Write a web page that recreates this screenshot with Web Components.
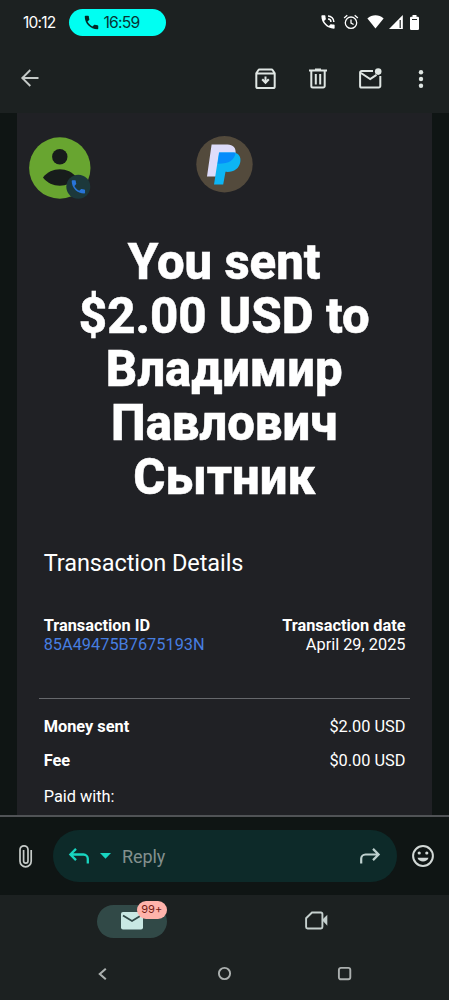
<!DOCTYPE html>
<html lang="en">
<head>
<meta charset="utf-8">
<title>Mail</title>
<style>
body{margin:0;width:449px;height:1000px;overflow:hidden;background:#1c2121;font-family:Roboto,"Noto Sans",sans-serif;color:#fff}
</style>
</head>
<body>
<mail-app></mail-app>
<script>
const define = (name, markup) => customElements.define(name, class extends HTMLElement {
  constructor() {
    super();
    const t = document.createElement('template');
    t.innerHTML = '<style>*{box-sizing:border-box}svg{display:block;flex:none;overflow:visible}</style>' + markup;
    this.attachShadow({ mode: 'open' }).appendChild(t.content.cloneNode(true));
  }
});
const handset = 'M6.62 10.79c1.44 2.83 3.76 5.14 6.59 6.59l2.2-2.2c.27-.27.67-.36 1.02-.24 1.12.37 2.33.57 3.57.57.55 0 1 .45 1 1V20c0 .55-.45 1-1 1C10.61 21 3 13.39 3 4c0-.55.45-1 1-1h3.5c.55 0 1 .45 1 1 0 1.25.2 2.45.57 3.57.11.35.03.74-.25 1.02z';

define('status-bar', `
<style>
:host{display:flex;align-items:center;height:44px;font-family:Inter,sans-serif}
.time{width:46px;margin-left:23px;font-size:15.500px;font-weight:400;letter-spacing:-.75px;white-space:nowrap}
.call{display:flex;align-items:center;width:96.500px;height:27px;border-radius:14px;background:#00fff2;color:#063634;padding-left:14.500px;font-size:15.700px;letter-spacing:-.8px}
.call svg{margin-right:5px}
.icons{display:flex;align-items:center;margin-left:155px}
</style>
<span class="time">10:12</span>
<div class="call"><svg width="15" height="15" viewBox="2 2 20 20" fill="#032826"><path d="${handset}"/></svg><span>16:59</span></div>
<div class="icons">
<svg width="14" height="14" viewBox="2.500 2.500 19 19" fill="#fff"><path d="${handset}"/><path d="M12 4a8 8 0 0 1 8 8M12 8a4 4 0 0 1 4 4" fill="none" stroke="#fff" stroke-width="2"/></svg>
<svg style="margin-left:8px" width="16" height="16" viewBox="0 0 16 16" fill="none" stroke="#fff" stroke-width="1.300"><circle cx="8" cy="8.700" r="5.700"/><path d="M8 5.400v3.700l2.600 1.400M1.100 4 4.300 1.200M14.900 4l-3.200-2.800"/></svg>
<svg style="margin-left:8px" width="17" height="14" viewBox="0 0 17 14" fill="#fff"><path d="M.4 3.500C5-.7 12-.7 16.600 3.500L8.500 13.600z"/></svg>
<svg style="margin-left:5px" width="14" height="14" viewBox="0 0 14 14" fill="#fff"><path d="M0 14 13.800 0v14z"/><path d="M11.200 5v8" stroke="#1c2121" stroke-width="1.200"/></svg>
<svg style="margin-left:7px" width="9" height="15" viewBox="0 0 9 15" fill="#fff"><rect y="1.700" width="9" height="13.300" rx="1.200"/><rect x="2.500" width="4" height="3"/><path d="M2 4.500h5" stroke="#1c2121" stroke-width="1"/></svg>
</div>`);

define('mail-toolbar', `
<style>
:host{display:flex;align-items:center;height:69px;padding-left:21px}
</style>
<svg style="margin-bottom:2px" width="18" height="18" viewBox="0 0 18 18" fill="none" stroke="#c5cac8" stroke-width="1.900"><path d="M17.500 9H1.500M9.300 1 1.300 9l8 8"/></svg>
<svg style="margin-left:216px" width="21" height="21" viewBox="0 0 21 21" fill="none" stroke="#dfe6e3" stroke-width="2"><path d="M1.300 5.200 3.300 2.200A1.600 1.600 0 0 1 4.500 1.500H16.500A1.600 1.600 0 0 1 17.700 2.200L19.700 5.200V18.400a1.600 1.600 0 0 1-1.600 1.600H2.900A1.600 1.600 0 0 1 1.300 18.400zM1.500 5.600h18M10.500 8.500v6"/><path d="M7.200 11.300l3.300 3.300 3.300-3.300" stroke-width="2.200"/></svg>
<svg style="margin-left:33px" width="18" height="21" viewBox="0 0 18 21" fill="none" stroke="#dfe6e3" stroke-width="2"><path d="M0 2.500h18M6 1.400h6M2.300 3v15a1.500 1.500 0 0 0 1.500 1.500h10.400a1.500 1.500 0 0 0 1.500-1.500V3M6.800 6v10.500M11.200 6v10.500"/></svg>
<svg style="margin-left:32px" width="23" height="21" viewBox="0 0 23 21"><path d="M14 3H2.700A1.600 1.600 0 0 0 1.100 4.600V18a1.600 1.600 0 0 0 1.600 1.600H19.700A1.600 1.600 0 0 0 21.300 18V8M2 5l9.200 6 6.300-4.200" fill="none" stroke="#dfe6e3" stroke-width="2"/><circle cx="19.200" cy="3.600" r="3.300" fill="#dfe6e3"/></svg>
<svg style="margin-left:36.500px" width="5" height="18" viewBox="0 0 5 18" fill="#dfe6e3"><circle cx="2" cy="2.300" r="2.200"/><circle cx="2" cy="9" r="2.200"/><circle cx="2" cy="15.700" r="2.200"/></svg>`);

define('sender-avatar', `
<style>:host{display:block;width:62px;height:62px}</style>
<svg width="62" height="62" viewBox="0 0 62 62"><circle cx="30.800" cy="31" r="30.700" fill="#68a530"/><circle cx="30.800" cy="19.800" r="7.700" fill="#171c1b"/><path d="M14 40.500C22 29.500 39.600 29.500 47.600 40.500C39.600 51.500 22 51.500 14 40.500z" fill="#171c1b"/><circle cx="49.300" cy="49.800" r="12" fill="#1c383b"/><g transform="translate(40.500 41) scale(.74)"><path fill="#2874d8" d="${handset}"/></g></svg>`);

define('paypal-logo', `
<style>:host{display:block;width:57px;height:57px}</style>
<svg width="57" height="57" viewBox="0 0 57 57"><circle cx="28.500" cy="28.200" r="28.200" fill="#534a3c"/><path d="M15.600 8.500H31.500C37 8.500 40.500 12 39.500 18 38 25.500 32 28.500 24.500 28L20 40.500H11z" fill="#dedcfa"/><path d="M23 16.500H37.500C43 17.200 45.200 21 44.300 26 43 33 37.500 36.500 29.500 35.800L27.200 48.500H18z" fill="#0db5f4"/><path d="M23.300 16.500H39.600C38.700 24 33 28 21.700 27.800z" fill="#078cfb"/></svg>`);

define('detail-row', `
<style>:host{display:flex;justify-content:space-between;height:19px;line-height:19px;font-size:16.330px;padding:0 26px 0 26.700px}</style>
<slot></slot>`);

define('mail-message', `
<style>
:host{display:block;height:702px;background:#0f1514;padding:0 17.500px 0 17px;overflow:hidden}
article{height:702px;background:#202125;overflow:hidden}
header{display:flex;padding:24px 0 0 11.500px;height:109px}
paypal-logo{margin:-1px 0 0 105px}
h1{margin:14px 0 0;font-size:49.100px;line-height:53.700px;font-weight:800;text-align:center;-webkit-text-stroke:.5px #fff}
h1 span{display:block;white-space:nowrap}
h2{margin:43px 0 0 26.700px;font-size:23.500px;line-height:30px;font-weight:400;letter-spacing:-.08px}
h2+detail-row{margin-top:38px}
a{color:#477ee0}
hr{margin:44px 22px 0;border:0;height:1px;background:#66686c}
</style>
<article>
<header><sender-avatar></sender-avatar><paypal-logo></paypal-logo></header>
<h1><span>You sent</span><span>$2.00 USD to</span><span>Владимир</span><span>Павлович</span><span>Сытник</span></h1>
<h2>Transaction Details</h2>
<detail-row><b>Transaction ID</b><b>Transaction date</b></detail-row>
<detail-row><a>85A49475B7675193N</a><span>April 29, 2025</span></detail-row>
<hr>
<detail-row style="margin-top:18px"><b>Money sent</b><span>$2.00 USD</span></detail-row>
<detail-row style="margin-top:15px"><b>Fee</b><span>$0.00 USD</span></detail-row>
<detail-row style="margin-top:17px"><span>Paid with:</span></detail-row>
</article>`);

define('reply-bar', `
<style>
:host{display:flex;align-items:center;height:80px;background:#0f1514;border-top:2px solid #505356;padding-left:19px}
.field{display:flex;align-items:center;width:344px;height:52.500px;margin-left:20.500px;border-radius:27px;background:#0d2a29;padding-left:16.500px}
.field span{width:238px;margin-left:11.500px;font-size:18px;letter-spacing:-.1px;color:#83908e}
</style>
<svg width="13" height="23" viewBox="0 0 13 23" fill="none" stroke="#c6cbc9" stroke-width="1.700"><path d="M12.200 5v11.200a5.600 5.600 0 0 1-11.200 0V4.800a4 4 0 0 1 8 0V16a2.200 2.200 0 0 1-4.400 0V5"/></svg>
<div class="field">
<svg width="20" height="16" viewBox="0 0 20 16" fill="none" stroke="#18d5c0" stroke-width="2.300"><path d="M7 .9 1.400 6.500 7 12.100M1.500 6.500H14.500a4.300 4.300 0 0 1 4.300 4.300v4.700"/></svg>
<svg style="margin-left:10.500px" width="11" height="6" viewBox="0 0 11 6" fill="#18d5c0"><path d="M0 0h11L5.500 5.800z"/></svg>
<span>Reply</span>
<svg width="20" height="16" viewBox="0 0 20 16" fill="none" stroke="#bed0ce" stroke-width="2.200"><path d="m13 .9 5.600 5.600L13 12.100M18.500 6.500H5.500A4.300 4.300 0 0 0 1.200 10.800v4.700"/></svg>
</div>
<svg style="margin-left:15px" width="22" height="22" viewBox="0 0 22 22"><circle cx="11" cy="11" r="9.900" fill="none" stroke="#d2d8d6" stroke-width="2"/><g fill="#d2d8d6"><circle cx="7.200" cy="8" r="1.600"/><circle cx="14.800" cy="8" r="1.600"/><path d="M5.500 12.700h11c-1.500 5-9.500 5-11 0z"/></g></svg>`);

define('bottom-nav', `
<style>
:host{display:flex;align-items:flex-start;height:56px;padding:9.500px 0 0 97px;background:#1c2121}
.mail{position:relative;display:flex;width:70px;height:33.500px;border-radius:17px;background:#314947;padding:7px 0 0 24px}
.badge{position:absolute;left:39.500px;top:-4px;width:30.500px;height:18px;border-radius:9px;background:#ffb3ab;color:#721b15;font:11px/17px Inter,sans-serif;letter-spacing:.1px;text-align:center}
</style>
<div class="mail"><svg width="22" height="18" viewBox="0 0 22 18"><rect width="22" height="17.500" rx="2" fill="#c9e8e3"/><path d="m2 3.500 9 5.500 9-5.500" fill="none" stroke="#314947" stroke-width="1.800"/></svg><span class="badge">99+</span></div>
<svg style="margin:6.500px 0 0 138px" width="23" height="19" viewBox="0 0 23 19"><path d="M7 1.500H16a1.400 1.400 0 0 1 1.400 1.400V16.100A1.400 1.400 0 0 1 16 17.500H2.500A1.400 1.400 0 0 1 1.100 16.100V7.200z" fill="none" stroke="#c5d0ce" stroke-width="1.900"/><path d="m17 9 5.300-5.200v11z" fill="#c5d0ce"/></svg>`);

define('system-nav', `
<style>:host{display:flex;align-items:center;height:49px;padding:0 0 4px 98px;background:#1c2121}</style>
<svg width="9" height="12" viewBox="0 0 9 12" fill="none" stroke="#abb0af" stroke-width="2.100"><path d="M7.800.7 1.800 6l6 5.300"/></svg>
<svg style="margin-left:111px" width="13" height="13" viewBox="0 0 13 13" fill="none" stroke="#abb0af" stroke-width="1.900"><circle cx="6.500" cy="6.500" r="5.600"/></svg>
<svg style="margin-left:107px" width="13" height="13" viewBox="0 0 13 13" fill="none" stroke="#abb0af" stroke-width="1.900"><rect x=".9" y=".9" width="11.400" height="11.400" rx="2"/></svg>`);

define('mail-app', `
<style>:host{display:flex;flex-direction:column;width:449px;height:1000px}:host>*{flex:none}</style>
<status-bar></status-bar>
<mail-toolbar></mail-toolbar>
<mail-message></mail-message>
<reply-bar></reply-bar>
<bottom-nav></bottom-nav>
<system-nav></system-nav>`);
</script>
</body>
</html>
